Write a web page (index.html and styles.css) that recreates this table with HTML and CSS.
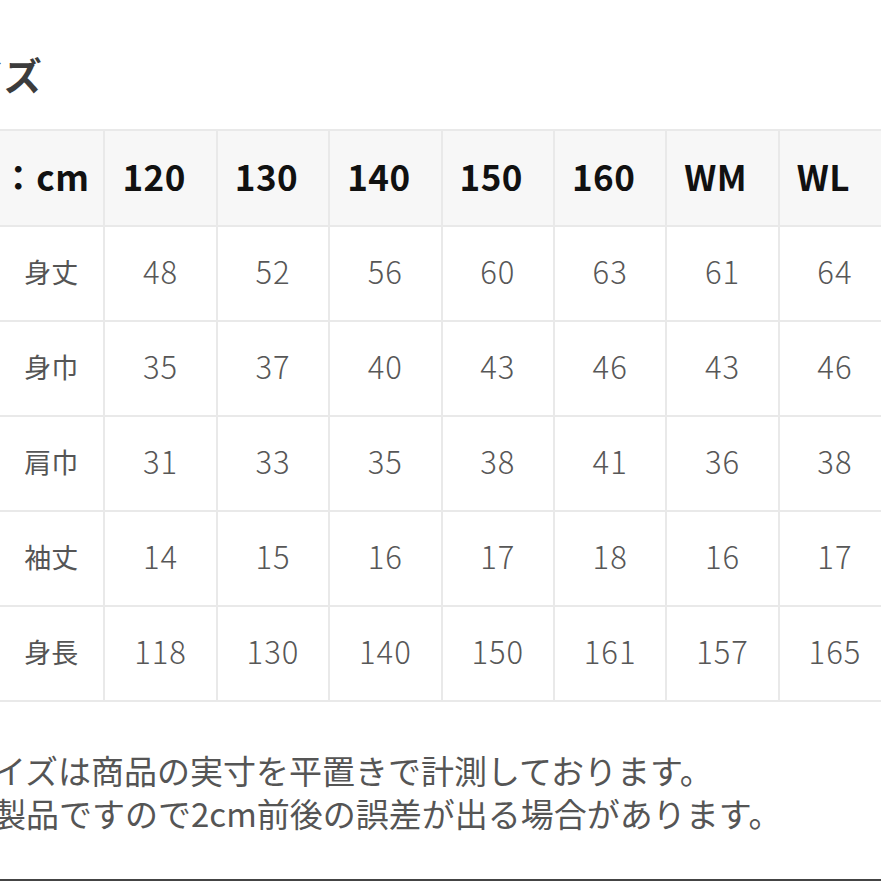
FILE: index.html
```html
<!DOCTYPE html>
<html lang="ja">
<head>
<meta charset="utf-8">
<title>サイズ</title>
<link rel="stylesheet" href="styles.css">
</head>
<body>
<div class="page">
  <h1 class="title">サイズ</h1>
  <div class="size-table">
    <div class="cell head head--unit"><span>単位：cm</span></div>
    <div class="cell head">120</div>
    <div class="cell head">130</div>
    <div class="cell head">140</div>
    <div class="cell head">150</div>
    <div class="cell head">160</div>
    <div class="cell head">WM</div>
    <div class="cell head">WL</div>

    <div class="cell label">身丈</div>
    <div class="cell num">48</div><div class="cell num">52</div><div class="cell num">56</div><div class="cell num">60</div><div class="cell num">63</div><div class="cell num">61</div><div class="cell num">64</div>

    <div class="cell label">身巾</div>
    <div class="cell num">35</div><div class="cell num">37</div><div class="cell num">40</div><div class="cell num">43</div><div class="cell num">46</div><div class="cell num">43</div><div class="cell num">46</div>

    <div class="cell label">肩巾</div>
    <div class="cell num">31</div><div class="cell num">33</div><div class="cell num">35</div><div class="cell num">38</div><div class="cell num">41</div><div class="cell num">36</div><div class="cell num">38</div>

    <div class="cell label">袖丈</div>
    <div class="cell num">14</div><div class="cell num">15</div><div class="cell num">16</div><div class="cell num">17</div><div class="cell num">18</div><div class="cell num">16</div><div class="cell num">17</div>

    <div class="cell label">身長</div>
    <div class="cell num">118</div><div class="cell num">130</div><div class="cell num">140</div><div class="cell num">150</div><div class="cell num">161</div><div class="cell num">157</div><div class="cell num">165</div>
  </div>
  <div class="notes">
    <p class="note note--first">サイズは商品の実寸を平置きで計測しております。</p>
    <p class="note">製品ですので2cm前後の誤差が出る場合があります。</p>
  </div>
</div>
</body>
</html>
```

FILE: styles.css
```css
html, body {
  margin: 0;
  padding: 0;
  background: #ffffff;
}

body {
  font-family: "Noto Sans CJK JP", "Noto Sans", sans-serif;
  overflow: hidden;
}

.page {
  width: 881px;
  height: 881px;
  box-sizing: border-box;
  overflow: hidden;
  border-bottom: 2px solid #444444;
}

.title {
  margin: 55px 0 0 -71px;
  font-size: 38px;
  line-height: 38px;
  height: 38px;
  font-weight: 700;
  color: #3c3c3c;
  white-space: nowrap;
}

.size-table {
  margin: 36px 0 0 -9px;
  display: grid;
  grid-template-columns: repeat(8, 110.4px);
  grid-template-rows: 94px repeat(5, 93px);
  gap: 2px;
  padding: 2px;
  width: max-content;
  background: #e9e9e9;
}

.cell {
  background: #ffffff;
  display: flex;
  align-items: center;
  white-space: nowrap;
  overflow: hidden;
  box-sizing: border-box;
}

.head {
  background: #f7f7f7;
  font-size: 35px;
  font-weight: 700;
  color: #111111;
  padding-left: 17px;
  padding-bottom: 5px;
  letter-spacing: 0.5px;
}

.head--unit {
  justify-content: flex-end;
  padding-left: 0;
  padding-right: 14px;
}

.label {
  justify-content: center;
  font-size: 27px;
  color: #555555;
  padding-left: 6px;
  padding-bottom: 4px;
}

.num {
  justify-content: center;
  font-size: 31px;
  font-weight: 300;
  color: #575757;
  letter-spacing: 1px;
  padding-bottom: 6px;
}

.notes {
  margin: 47px 0 0 -7px;
}

.note {
  margin: 0;
  font-size: 33px;
  line-height: 43px;
  color: #555555;
  white-space: nowrap;
}

.note--first {
  text-indent: -33px;
}
```
